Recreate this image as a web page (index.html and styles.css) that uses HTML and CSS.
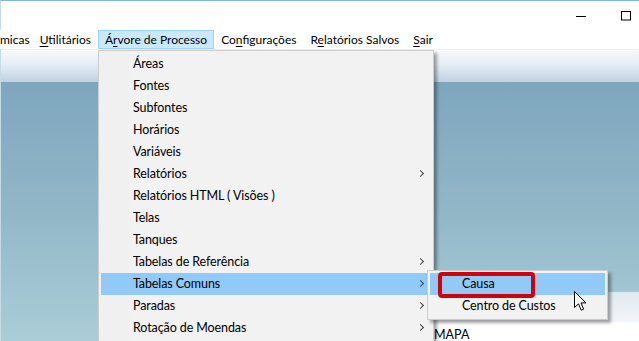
FILE: index.html
```html
<!DOCTYPE html>
<html lang="pt">
<head>
  <meta charset="UTF-8">
  <title>Árvore de Processo</title>
  <link rel="stylesheet" href="styles.css">
</head>
<body>
  <div class="window">
    <div class="titlebar">
      <div class="caption-btn">
        <svg width="10" height="10" viewBox="0 0 10 10"><path d="M0 5.5h10" stroke="#000" stroke-width="1"/></svg>
      </div>
      <div class="caption-btn last">
        <svg width="10" height="10" viewBox="0 0 10 10"><rect x="0.5" y="0.5" width="9" height="8.5" fill="none" stroke="#000" stroke-width="1"/></svg>
      </div>
    </div>

    <div class="menubar">
      <div class="menu-item first">micas</div>
      <div class="menu-item"><u>U</u>tilitários</div>
      <div class="menu-item open">Á<u>r</u>vore de Processo</div>
      <div class="menu-item">Co<u>n</u>figurações</div>
      <div class="menu-item">R<u>e</u>latórios Salvos</div>
      <div class="menu-item"><u>S</u>air</div>
    </div>

    <div class="client">
      <div class="band"></div>
      <div class="desk"></div>
    </div>

    <!-- child window behind the menus -->
    <div class="child">
      <div class="child-band"></div>
      <div class="child-body">MAPA</div>
    </div>

    <div class="dropdown">
      <div class="drop-item">Áreas</div>
      <div class="drop-item">Fontes</div>
      <div class="drop-item">Subfontes</div>
      <div class="drop-item">Horários</div>
      <div class="drop-item">Variáveis</div>
      <div class="drop-item sub">Relatórios <span class="chev"></span></div>
      <div class="drop-item">Relatórios HTML ( Visões )</div>
      <div class="drop-item">Telas</div>
      <div class="drop-item">Tanques</div>
      <div class="drop-item sub">Tabelas de Referência <span class="chev"></span></div>
      <div class="drop-item sub active">Tabelas Comuns <span class="chev"></span></div>
      <div class="drop-item sub">Paradas <span class="chev"></span></div>
      <div class="drop-item sub">Rotação de Moendas <span class="chev"></span></div>
    </div>

    <div class="submenu">
      <div class="drop-item active">Causa</div>
      <div class="drop-item">Centro de Custos</div>
    </div>

    <div class="callout"></div>

    <svg class="cursor" width="13" height="21" viewBox="0 0 13 21">
      <path d="M0.5 0.5 L0.5 16.5 L4.5 12.8 L7.2 19.2 L9.6 18.2 L7 11.9 L12 11.9 Z" fill="#fff" stroke="#000" stroke-width="1" stroke-linejoin="miter"/>
    </svg>
  </div>
</body>
</html>
```

FILE: styles.css
```css
body {
  margin: 0;
  width: 639px;
  height: 341px;
  overflow: hidden;
  font-family: Lato, "Noto Sans", sans-serif;
  font-size: 12.5px;
  color: #000;
  background: #fff;
}
.window {
  position: relative;
  height: 341px;
  border-top: 1px solid #84b6e4;
  border-left: 1px solid #c6dbe6;
  display: flex;
  flex-direction: column;
  box-sizing: border-box;
}
.titlebar {
  height: 29px;
  background: #fff;
  display: flex;
  justify-content: flex-end;
}
.caption-btn {
  width: 45px;
  display: flex;
  align-items: center;
  justify-content: center;
}
.caption-btn svg {
  display: block;
}
.caption-btn.last {
  margin-right: -9px;
}
.menubar {
  height: 19px;
  background: #fff;
  display: flex;
  align-items: stretch;
  margin-left: -1px;
  font-size: 12px;
}
.menu-item {
  padding: 0 6px;
  line-height: 17px;
  border: 1px solid transparent;
  white-space: nowrap;
}
.menu-item.first {
  padding: 0 2px 0 0;
  border-left: 0;
}
.menu-item.open {
  background: #cce8ff;
  border-color: #99d1ff;
}
.menu-item u {
  text-underline-offset: 2px;
}
.client {
  flex: 1;
  display: flex;
  flex-direction: column;
}
.band {
  height: 32px;
  border-top: 1px solid #eaeff3;
  background: linear-gradient(#f7f9fb, #e9eff5 40%, #bed2e2);
}
.desk {
  flex: 1;
  background: linear-gradient(#7ea6be, #8fb5c6 45%, #aacdd7);
}

/* open menus */
.dropdown,
.submenu {
  position: absolute;
  background: #f2f2f2;
  border: 1px solid #cccccc;
  padding: 2px;
  box-shadow: 3px 3px 3px rgba(0, 0, 0, 0.35);
  letter-spacing: -0.1px;
}
.dropdown {
  left: 97px;
  top: 49px;
  width: 330px;
  padding-bottom: 4px;
  background: linear-gradient(to right, #f0f0f0 30px, #f2f2f2 30px);
}
.submenu {
  left: 426px;
  top: 269px;
  width: 175px;
}
.drop-item {
  position: relative;
  height: 22px;
  line-height: 22px;
  padding-left: 32px;
  white-space: nowrap;
}
.drop-item.active {
  background: #91c9f7;
}
.chev {
  position: absolute;
  right: 8px;
  top: 8px;
  width: 4px;
  height: 4px;
  border-top: 1px solid #444;
  border-right: 1px solid #444;
  transform: rotate(45deg);
}
.callout {
  position: absolute;
  left: 437px;
  top: 271px;
  width: 89px;
  height: 18px;
  border: 4px solid #d0000f;
  border-radius: 4px;
}
.child {
  position: absolute;
  left: 431px;
  top: 291px;
  width: 220px;
  height: 60px;
  border-left: 1px solid #9a9a9a;
}
.child-band {
  height: 30px;
  background: linear-gradient(#dfe8ef, #f3f6f9);
}
.child-body {
  background: #fff;
  height: 30px;
  padding: 6px 0 0 1px;
  box-sizing: border-box;
  line-height: 14px;
}
.cursor {
  position: absolute;
  left: 573px;
  top: 290px;
}
```
